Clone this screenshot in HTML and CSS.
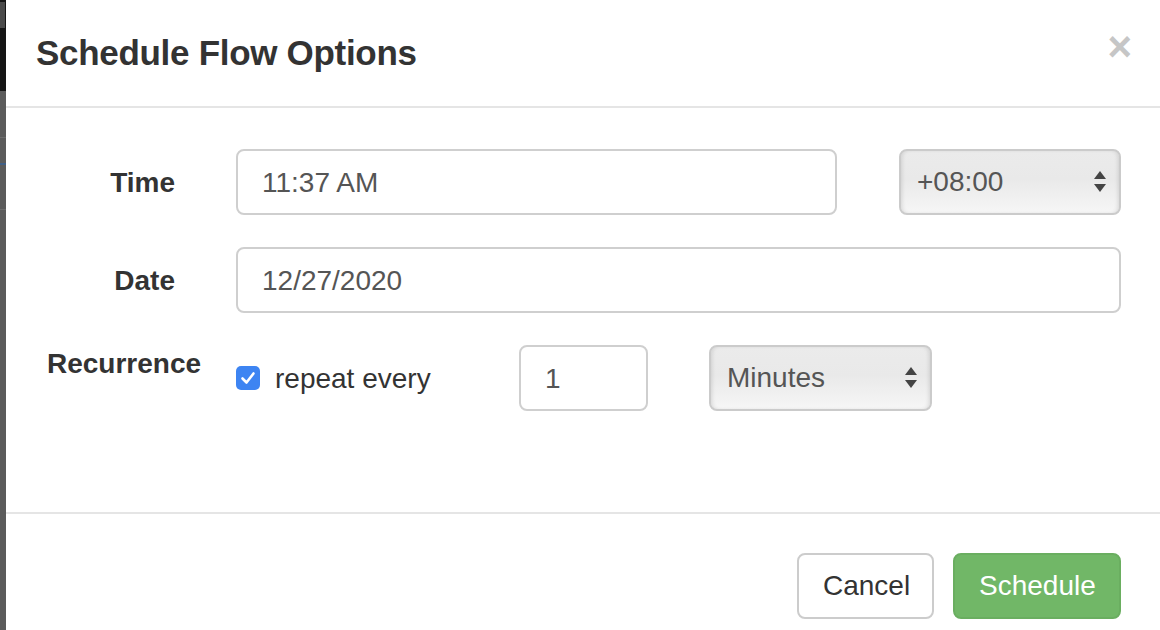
FILE: index.html
```html
<!DOCTYPE html>
<html>
<head>
<meta charset="utf-8">
<link rel="stylesheet" href="styles.css">
</head>
<body>
<div class="page">
  <div class="backdrop">
    <div class="bd-top"><span class="bd-mark"></span></div>
    <div class="bd-bottom">
      <span class="bd-line bd-line-a"></span>
      <span class="bd-line bd-line-b"></span>
      <span class="bd-line bd-line-c"></span>
    </div>
  </div>
  <div class="modal">
    <div class="modal-header">
      <h4 class="modal-title">Schedule Flow Options</h4>
      <span class="close">×</span>
    </div>
    <div class="modal-body">
      <div class="form-row">
        <label class="row-label">Time</label>
        <div class="row-fields">
          <div class="input input-time">11:37 AM</div>
          <div class="select select-tz">
            <span>+08:00</span>
            <svg class="arrows" width="14" height="24" viewBox="0 0 14 24"><path d="M7 1 L13 9 L1 9 Z" fill="#444"/><path d="M1 14 L13 14 L7 22 Z" fill="#444"/></svg>
          </div>
        </div>
      </div>
      <div class="form-row">
        <label class="row-label">Date</label>
        <div class="row-fields">
          <div class="input input-full">12/27/2020</div>
        </div>
      </div>
      <div class="form-row form-row-top">
        <label class="row-label row-label-left">Recurrence</label>
        <div class="row-fields">
          <div class="check">
            <span class="checkbox"><svg width="24" height="24" viewBox="0 0 24 24"><path d="M6.5 12.5 L10.5 16.5 L17.5 7.5" fill="none" stroke="#fff" stroke-width="2.6" stroke-linecap="round" stroke-linejoin="round"/></svg></span>
            <span class="check-text">repeat every</span>
          </div>
          <div class="input input-num">1</div>
          <div class="select select-unit">
            <span>Minutes</span>
            <svg class="arrows" width="14" height="24" viewBox="0 0 14 24"><path d="M7 1 L13 9 L1 9 Z" fill="#444"/><path d="M1 14 L13 14 L7 22 Z" fill="#444"/></svg>
          </div>
        </div>
      </div>
    </div>
    <div class="modal-footer">
      <button class="btn btn-default">Cancel</button>
      <button class="btn btn-success">Schedule</button>
    </div>
  </div>
</div>
</body>
</html>
```

FILE: styles.css
```css
* { box-sizing: border-box; }
html, body { margin: 0; padding: 0; }
body {
  width: 1160px;
  height: 630px;
  overflow: hidden;
  font-family: "Liberation Sans", Arial, sans-serif;
  background: #fff;
}
.page {
  display: flex;
  height: 630px;
}
.backdrop {
  width: 6px;
  display: flex;
  flex-direction: column;
}
.bd-top {
  height: 91px;
  background: #151515;
}
.bd-mark {
  display: block;
  width: 5px;
  height: 26px;
  margin-top: 2px;
  background: #4a4a4a;
}
.bd-bottom {
  flex: 1;
  background: #5b5b5b;
  display: flex;
  flex-direction: column;
}
.bd-line { display: block; height: 1px; background: #6d6d6d; }
.bd-line-a { margin-top: 46px; }
.bd-line-b { margin-top: 25px; background: #3f5f86; height: 2px; }
.bd-line-c { margin-top: 44px; }

.modal {
  flex: 1;
  display: flex;
  flex-direction: column;
  background: #fff;
}
.modal-header {
  height: 108px;
  border-bottom: 2px solid #e5e5e5;
  display: flex;
  align-items: center;
  justify-content: space-between;
  padding: 0 30px 0 30px;
}
.modal-title {
  margin: 0;
  font-size: 35px;
  font-weight: 700;
  color: #333;
  letter-spacing: -0.3px;
}
.close {
  font-size: 42px;
  font-weight: 700;
  color: #c6c6c6;
  line-height: 1;
  margin-right: -2px;
  margin-bottom: 12px;
}
.modal-body {
  height: 404px;
  padding: 41px 39px 0 0;
  display: flex;
  flex-direction: column;
  gap: 32px;
}
.form-row {
  display: flex;
  align-items: center;
  height: 66px;
}
.row-label {
  width: 230px;
  flex: none;
  text-align: right;
  padding-right: 61px;
  padding-top: 1px;
  font-size: 28px;
  font-weight: 700;
  color: #333;
}
.form-row-top .row-label {
  align-self: flex-start;
  line-height: 40px;
  margin-top: -1px;
}
.row-label-left {
  text-align: left;
  padding: 0 0 0 41px;
}
.row-fields {
  flex: 1;
  display: flex;
  align-items: center;
  height: 66px;
}
.input {
  height: 66px;
  border: 2px solid #cfcfcf;
  border-radius: 8px;
  padding: 1px 24px 0;
  display: flex;
  align-items: center;
  font-size: 28px;
  color: #555;
  background: #fff;
}
.input-time { width: 601px; margin-right: 62px; }
.input-full { flex: 1; }
.input-num { width: 129px; margin-right: 61px; }
.select {
  height: 66px;
  border: 2px solid #cbcbcb;
  border-radius: 8px;
  padding: 0 12px 0 16px;
  display: flex;
  align-items: center;
  justify-content: space-between;
  font-size: 28px;
  color: #555;
  background: linear-gradient(#ebebeb 0%, #e9e9e9 45%, #f6f6f6 100%);
  box-shadow: inset 3px 0 4px -2px rgba(0,0,0,0.12), inset -3px 0 4px -2px rgba(0,0,0,0.12);
}
.select-tz { width: 222px; }
.select-unit { width: 223px; }
.arrows { display: block; }
.check {
  width: 283px;
  display: flex;
  align-items: center;
}
.checkbox {
  width: 24px;
  height: 24px;
  border-radius: 5px;
  background: #3d84f2;
  display: flex;
  margin-right: 15px;
}
.check-text {
  font-size: 28px;
  color: #333;
  position: relative;
  top: 1px;
}
.modal-footer {
  flex: 1;
  border-top: 2px solid #e5e5e5;
  padding: 39px 39px 0 0;
  display: flex;
  justify-content: flex-end;
  align-items: flex-start;
  gap: 19px;
}
.btn {
  height: 66px;
  border-radius: 8px;
  font-family: "Liberation Sans", Arial, sans-serif;
  font-size: 28px;
  padding: 0 24px;
  border: 2px solid #ccc;
  background: #fff;
  color: #333;
}
.btn-default { width: 137px; }
.btn-success {
  width: 168px;
  background: #71b767;
  border-color: #6aae60;
  color: #fff;
}
```
